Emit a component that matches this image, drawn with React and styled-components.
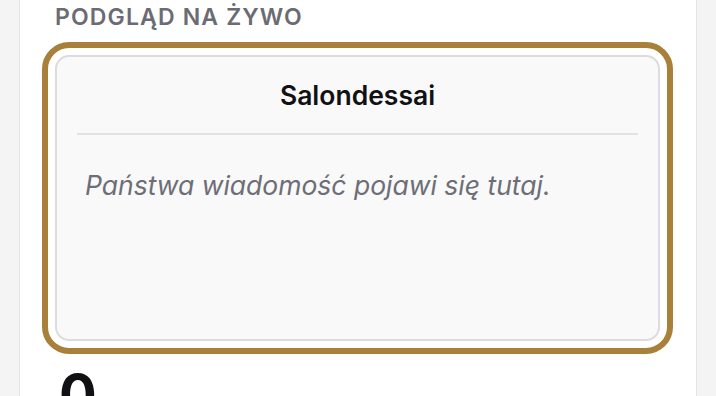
import React from "react";
import styled, { createGlobalStyle } from "styled-components";

const Global = createGlobalStyle`
  html, body { margin: 0; padding: 0; background: #f4f4f5; }
  body { font-family: Inter, "Noto Sans", sans-serif; overflow: hidden; }
`;

const Page = styled.div`
  display: flex;
  justify-content: center;
  height: 396px;
  padding: 0 19px;
`;

const Panel = styled.section`
  flex: 1;
  background: #ffffff;
  border-left: 1px solid #e4e4e7;
  border-right: 1px solid #e4e4e7;
  padding: 2px 36px 0 35px;
  display: flex;
  flex-direction: column;
  overflow: hidden;
`;

const Heading = styled.h3`
  margin: 0;
  flex-shrink: 0;
  font-size: 23px;
  line-height: 30px;
  font-weight: 600;
  letter-spacing: 0.05em;
  text-transform: uppercase;
  color: #6b6b74;
`;

const Preview = styled.div`
  margin-top: 23px;
  flex-shrink: 0;
  height: 286px;
  box-sizing: border-box;
  background: #f9f9fa;
  border: 2px solid #dcdcdf;
  border-radius: 14px;
  outline: 6px solid #a8803a;
  outline-offset: 7px;
  padding: 0 20px;
  display: flex;
  flex-direction: column;
`;

const Sender = styled.div`
  text-align: center;
  font-size: 26.5px;
  font-weight: 600;
  color: #111114;
  padding: 25px 0 24px;
  line-height: 26.5px;
  border-bottom: 2px solid #e2e2e5;
`;

const Message = styled.p`
  margin: 0;
  padding: 34px 8px 0;
  font-size: 26.5px;
  line-height: 32px;
  font-style: italic;
  color: #6e6e76;
`;

const Count = styled.div`
  margin-top: 26px;
  flex-shrink: 0;
  padding-left: 4px;
  font-size: 56px;
  line-height: 56px;
  font-weight: 700;
  color: #111114;
`;

export default function App() {
  return (
    <>
      <Global />
      <Page>
        <Panel>
          <Heading>Podgląd na żywo</Heading>
          <Preview>
            <Sender>Salondessai</Sender>
            <Message>Państwa wiadomość pojawi się tutaj.</Message>
          </Preview>
          <Count>0</Count>
        </Panel>
      </Page>
    </>
  );
}
